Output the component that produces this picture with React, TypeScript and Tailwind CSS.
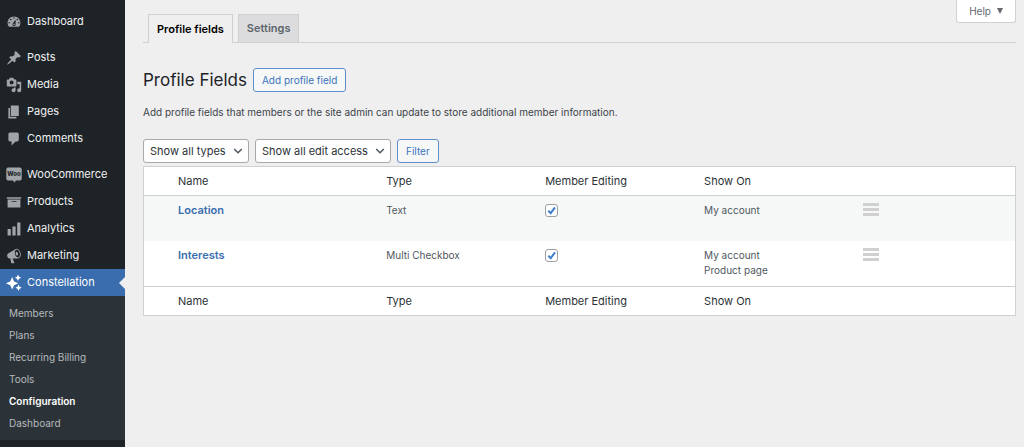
import React, { useState } from "react";

type IconProps = { className?: string };

const glyphs: Record<string, string> = {
  dashboard:
    "M3.76 16h12.48c1.1-1.37 1.76-3.11 1.76-5 0-4.42-3.58-8-8-8s-8 3.58-8 8c0 1.89.66 3.63 1.76 5zM10 4c.55 0 1 .45 1 1s-.45 1-1 1-1-.45-1-1 .45-1 1-1zM6 6c.55 0 1 .45 1 1s-.45 1-1 1-1-.45-1-1 .45-1 1-1zm8 0c.55 0 1 .45 1 1s-.45 1-1 1-1-.45-1-1 .45-1 1-1zm-5.37 5.55L12 7v6c0 1.1-.9 2-2 2s-2-.9-2-2c0-.57.24-1.08.63-1.45zM4 10c.55 0 1 .45 1 1s-.45 1-1 1-1-.45-1-1 .45-1 1-1zm12 0c.55 0 1 .45 1 1s-.45 1-1 1-1-.45-1-1 .45-1 1-1zm-5 3c0-.55-.45-1-1-1s-1 .45-1 1 .45 1 1 1 1-.45 1-1z",
  posts:
    "M10.44 3.02l1.82-1.82 6.36 6.35-1.83 1.82c-1.05-.68-2.48-.57-3.41.36l-.75.75c-.92.93-1.04 2.35-.35 3.41l-1.83 1.82-2.41-2.41-2.8 2.79c-.42.42-3.38 2.71-3.8 2.29s1.86-3.39 2.28-3.81l2.79-2.79L4.1 9.36l1.83-1.82c1.05.69 2.48.57 3.4-.36l.75-.75c.93-.92 1.05-2.35.36-3.41z",
  media:
    "M13 11V4c0-.55-.45-1-1-1h-1.67L9 1H5L3.67 3H2c-.55 0-1 .45-1 1v7c0 .55.45 1 1 1h10c.55 0 1-.45 1-1zM7 4.5c1.38 0 2.5 1.12 2.5 2.5S8.38 9.5 7 9.5 4.5 8.38 4.5 7 5.62 4.5 7 4.5zM14 6h5v10.5c0 1.38-1.12 2.5-2.5 2.5S14 17.88 14 16.5s1.12-2.5 2.5-2.5c.17 0 .34.02.5.05V9h-3V6zm-4 8.05V13h2v3.5c0 1.38-1.12 2.5-2.5 2.5S7 17.88 7 16.5 8.12 14 9.5 14c.17 0 .34.02.5.05z",
  pages: "M6 15V2h10v13H6zm-1 1h8v2H3V5h2v11z",
  comments:
    "M5 2h9c1.1 0 2 .9 2 2v7c0 1.1-.9 2-2 2h-2l-5 5v-5H5c-1.1 0-2-.9-2-2V4c0-1.1.9-2 2-2z",
  products: "M19 4v2H1V4h18zM2 7h16v10H2V7zm11 3V9H7v1h6z",
  analytics: "M18 18V2h-4v16h4zm-6 0V7H8v11h4zm-6 0v-8H2v8h4z",
  marketing:
    "M18.15 5.94c.46 1.62.38 3.22-.02 4.48-.42 1.28-1.26 2.18-2.3 2.48-.16.06-.26.06-.4.06-.06.02-.12.02-.18.02-.06.02-.14.02-.22.02h-6.8l2.22 5.5c.02.14-.06.26-.14.34-.08.1-.24.16-.34.16H6.95c-.1 0-.26-.06-.34-.16-.08-.08-.16-.2-.14-.34l-1-5.5H4.25l-.02-.02c-.5.06-1.08-.18-1.54-.62s-.88-1.08-1.06-1.88c-.24-.8-.2-1.56-.02-2.2.18-.62.58-1.08 1.06-1.3l.02-.02 9-5.4c.1-.06.18-.1.24-.16.06-.04.14-.08.24-.12.16-.08.28-.12.5-.18 1.04-.3 2.24.1 3.22.98s1.84 2.24 2.26 3.86zm-2.58 5.98h-.02c.4-.1.74-.34 1.04-.7.58-.7.86-1.76.86-3.04 0-.64-.1-1.3-.28-1.98-.34-1.36-1.02-2.5-1.78-3.24s-1.68-1.1-2.46-.88c-.82.22-1.4.96-1.7 2-.32 1.04-.28 2.36.06 3.72.38 1.36 1 2.5 1.8 3.24.78.74 1.62 1.1 2.48.88zm-2.54-7.08c.22-.04.42-.02.62.04.38.16.76.48 1.02 1s.42 1.2.42 1.78c0 .3-.04.56-.12.8-.18.48-.44.84-.86.94-.34.1-.8-.06-1.14-.4s-.64-.86-.78-1.5c-.18-.62-.12-1.24.02-1.72s.48-.84.82-.94z",
  constellation:
    "M7.7 2.600 10.100 8 15.500 10.400 10.100 12.800 7.700 18.200 5.300 12.800 -.1 10.400 5.300 8zM15 -.6 16.300 2.100 19 3.400 16.300 4.700 15 7.400 13.700 4.700 11 3.400 13.700 2.100zM15.700 11.900 17 14.600 19.700 15.900 17 17.200 15.700 19.900 14.400 17.200 11.700 15.900 14.400 14.600z",
};

function MenuIcon({ name, className }: IconProps & { name: string }) {
  if (name === "woo") {
    return (
      <svg viewBox="0 0 16 16" className={className} aria-hidden="true">
        <path
          fill="currentColor"
          d="M2 .5h12A1.7 1.7 0 0 1 15.700 2.200v9.600a1.700 1.700 0 0 1-1.700 1.700H9.800L8.700 15.500 6.800 13.500H2A1.700 1.700 0 0 1 .3 11.800V2.200A1.700 1.700 0 0 1 2 .5z"
        />
        <text
          x="8"
          y="9.200"
          textAnchor="middle"
          fontFamily="Inter, sans-serif"
          fontWeight="800"
          fontSize="6"
          fill="#1d2327"
        >
          Woo
        </text>
      </svg>
    );
  }
  return (
    <svg viewBox="0 0 20 20" className={className} fill="currentColor" aria-hidden="true">
      <path d={glyphs[name]} />
    </svg>
  );
}

const menuGroups = [
  [{ icon: "dashboard", label: "Dashboard" }],
  [
    { icon: "posts", label: "Posts" },
    { icon: "media", label: "Media" },
    { icon: "pages", label: "Pages" },
    { icon: "comments", label: "Comments" },
  ],
  [
    { icon: "woo", label: "WooCommerce" },
    { icon: "products", label: "Products" },
    { icon: "analytics", label: "Analytics" },
    { icon: "marketing", label: "Marketing" },
    { icon: "constellation", label: "Constellation", active: true },
  ],
] as { icon: string; label: string; active?: boolean }[][];

const submenu = ["Members", "Plans", "Recurring Billing", "Tools", "Configuration", "Dashboard"];

function Sidebar() {
  return (
    <nav aria-label="Main menu" className="w-[125px] shrink-0 bg-[#1d2327] pt-2">
      <div className="flex flex-col gap-[9px]">
        {menuGroups.map((group, i) => (
          <ul key={i}>
            {group.map((item) => (
              <li key={item.label}>
                <a
                  href="#"
                  className={
                    item.active
                      ? "relative flex h-[27px] items-center gap-[5px] bg-[#3a6dae] pl-1.5 text-[11px] text-white"
                      : "flex h-[27px] items-center gap-[5px] pl-1.5 text-[11px] text-[#f0f0f1]"
                  }
                >
                  <MenuIcon
                    name={item.icon}
                    className={
                      item.active
                        ? "size-4 overflow-visible text-white"
                        : "size-4 text-[#a0a5aa]"
                    }
                  />
                  {item.label}
                  {item.active && (
                    <span className="absolute right-0 border-y-[6px] border-r-[6px] border-y-transparent border-r-[#efefef]" />
                  )}
                </a>
              </li>
            ))}
          </ul>
        ))}
      </div>
      <ul className="bg-[#2c3338] py-1.5">
        {submenu.map((label) => (
          <li key={label}>
            <a
              href="#"
              className={
                label === "Configuration"
                  ? "flex h-[22px] items-center pl-[9px] text-[10px] font-semibold text-white"
                  : "flex h-[22px] items-center pl-[9px] text-[10px] text-[#b6babe]"
              }
            >
              {label}
            </a>
          </li>
        ))}
      </ul>
    </nav>
  );
}

function FilterSelect({ label, option, width }: { label: string; option: string; width: string }) {
  return (
    <div className={`relative ${width}`}>
      <select
        aria-label={label}
        className="block h-6 w-full appearance-none rounded-[3px] border border-[#a7a9ac] bg-white pl-1.5 pr-5 text-[11px] text-[#2c3338]"
      >
        <option>{option}</option>
      </select>
      <svg
        viewBox="0 0 10 10"
        className="pointer-events-none absolute right-1.5 top-[7px] size-2.5"
        fill="none"
        stroke="#50575e"
        strokeWidth="1.500"
        aria-hidden="true"
      >
        <path d="M1.200 3 5 6.800 8.800 3" />
      </svg>
    </div>
  );
}

function EditingCheckbox({ label }: { label: string }) {
  const [checked, setChecked] = useState(true);
  return (
    <span className="relative block size-[13px]">
      <input
        type="checkbox"
        aria-label={label}
        checked={checked}
        onChange={(e) => setChecked(e.target.checked)}
        className="block size-[13px] appearance-none rounded-[3px] border border-[#9c9fa4] bg-white"
      />
      {checked && (
        <svg
          viewBox="0 0 13 13"
          className="pointer-events-none absolute inset-0 size-[13px]"
          fill="none"
          stroke="#3f7fce"
          strokeWidth="2"
          aria-hidden="true"
        >
          <path d="M3.300 6.700 5.700 9.200 10 3.300" />
        </svg>
      )}
    </span>
  );
}

const rows = [
  { name: "Location", type: "Text", showOn: ["My account"] },
  { name: "Interests", type: "Multi Checkbox", showOn: ["My account", "Product page"] },
];

function HeadingRow() {
  return (
    <tr className="h-[29px] text-left text-[11px] text-[#2c3338]">
      <td />
      {["Name", "Type", "Member Editing", "Show On"].map((heading) => (
        <th key={heading} scope="col" className="px-[7px] font-normal">
          {heading}
        </th>
      ))}
      <td />
    </tr>
  );
}

function FieldsTable() {
  return (
    <table className="w-full table-fixed border-separate border-spacing-0 border border-[#d0d1d3] bg-white">
      <colgroup>
        <col className="w-[27px]" />
        <col />
        <col className="w-[18.25%]" />
        <col className="w-[18.25%]" />
        <col className="w-[18.25%]" />
        <col className="w-[18.25%]" />
      </colgroup>
      <thead className="[&_td]:border-b [&_td]:border-[#d0d1d3] [&_th]:border-b [&_th]:border-[#d0d1d3]">
        <HeadingRow />
      </thead>
      <tbody>
        {rows.map((row) => (
          <tr
            key={row.name}
            className="h-[45px] align-top text-[10px] leading-[15px] text-[#50575e] odd:bg-[#f6f7f7]"
          >
            <td />
            <td className="px-[7px] pt-[7px] text-[11px]">
              <a href="#" className="font-semibold text-[#3a6dae]">
                {row.name}
              </a>
            </td>
            <td className="px-[7px] pt-[7px]">{row.type}</td>
            <td className="px-[7px] pt-2">
              <EditingCheckbox label={`Member editing for ${row.name}`} />
            </td>
            <td className="px-[7px] pt-[7px]">
              {row.showOn.map((place) => (
                <div key={place}>{place}</div>
              ))}
            </td>
            <td className="px-[7px] pt-[7px]">
              <button type="button" aria-label={`Reorder ${row.name}`} className="flex w-4 flex-col gap-0.5">
                <span className="h-[3px] w-full bg-[#d0d0d0]" />
                <span className="h-[3px] w-full bg-[#d0d0d0]" />
                <span className="h-[3px] w-full bg-[#d0d0d0]" />
              </button>
            </td>
          </tr>
        ))}
      </tbody>
      <tfoot className="[&_td]:border-t [&_td]:border-[#d0d1d3] [&_th]:border-t [&_th]:border-[#d0d1d3]">
        <HeadingRow />
      </tfoot>
    </table>
  );
}

export default function App() {
  return (
    <div className="flex min-h-screen bg-[#efefef] font-['Inter',sans-serif] text-[#3c434a]">
      <Sidebar />
      <main className="relative min-w-0 flex-1 pl-[18px] pr-2 pt-3.5">
        <button
          type="button"
          className="absolute right-2 top-0 flex h-[23px] items-center gap-1.5 rounded-b-[3px] border border-t-0 border-[#d0d1d3] bg-white px-3 text-[10px] text-[#646970]"
        >
          Help
          <span className="border-x-[3px] border-t-[6px] border-x-transparent border-t-[#646970]" />
        </button>

        <nav
          aria-label="Sections"
          className="flex gap-[5px] border-b border-[#cfd0d2] pl-[5px] text-[11px] font-semibold"
        >
          <a
            href="#"
            className="-mb-px flex h-[29px] items-center border border-b-0 border-[#cfd0d2] bg-[#efefef] px-2 text-black"
          >
            Profile fields
          </a>
          <a
            href="#"
            className="flex h-7 items-center border border-b-0 border-[#cfd0d2] bg-[#dcdcde] px-2 text-[#5d646b]"
          >
            Settings
          </a>
        </nav>

        <header className="mt-[25px] flex items-center gap-1.5">
          <h1 className="text-[17px] leading-6 text-[#1d2327]">Profile Fields</h1>
          <button
            type="button"
            className="h-6 rounded-[3px] border border-[#5f8fcb] bg-[#f6f7f7] px-2 text-[10px] text-[#3a74bd]"
          >
            Add profile field
          </button>
        </header>

        <p className="mt-3 text-[10px] leading-4">
          Add profile fields that members or the site admin can update to store additional member information.
        </p>

        <form className="mb-[3px] mt-[19px] flex gap-1.5" onSubmit={(e) => e.preventDefault()}>
          <FilterSelect label="Field type" option="Show all types" width="w-[106px]" />
          <FilterSelect label="Edit access" option="Show all edit access" width="w-[136px]" />
          <button
            type="submit"
            className="h-6 rounded-[3px] border border-[#5f8fcb] bg-[#f6f7f7] px-2 text-[10px] text-[#3a74bd]"
          >
            Filter
          </button>
        </form>

        <FieldsTable />
      </main>
    </div>
  );
}
